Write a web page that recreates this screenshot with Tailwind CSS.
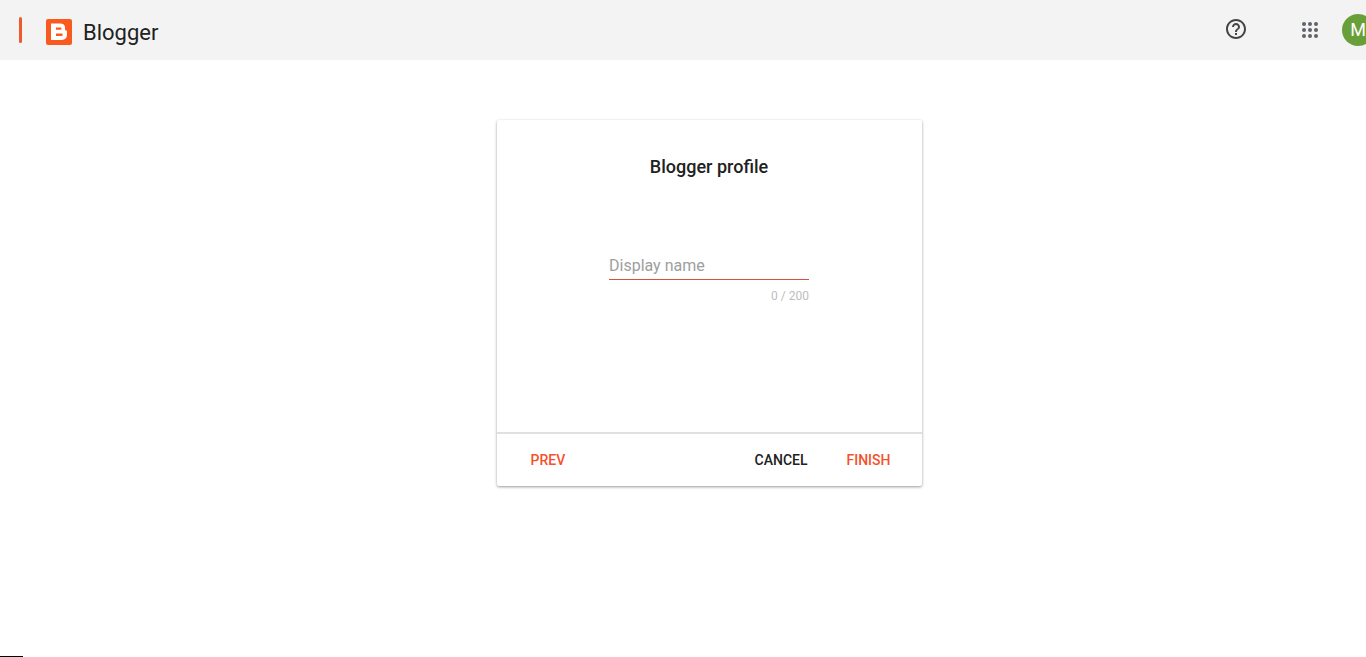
<!DOCTYPE html>
<html lang="en">
<head>
  <meta charset="UTF-8">
  <meta name="viewport" content="width=device-width, initial-scale=1.0">
  <title>Blogger</title>
  <script src="https://cdn.jsdelivr.net/npm/@tailwindcss/browser@4"></script>
</head>
<body class="min-h-screen bg-white font-[Roboto,sans-serif] text-[#212121]">
  <header class="flex h-15 items-center overflow-hidden bg-[#f3f3f3] pl-[19px]">
    <button aria-label="Main menu" class="mr-6 h-[26px] w-[3px] rounded-sm bg-[#f0592a]"></button>
    <a href="#" class="flex items-center gap-[11px] pt-1">
      <!-- Blogger logo -->
      <svg class="size-[26px]" viewBox="0 0 26 26" aria-hidden="true">
        <rect width="26" height="26" rx="2" fill="#fb5a1f"/>
        <path fill="#fff" fill-rule="evenodd" d="M5 4.500h9c3.300 0 5 1.600 5 4v1.700c0 .8.400 1.200 1 1.200.7 0 1 .4 1 1v3.400c0 3.300-1.900 5.200-5.200 5.200H5zM10 8.500v2.300h4.400a1.100 1.100 0 0 0 0-2.300zM10 14.500v2.400h5.500a1.200 1.200 0 0 0 0-2.400z"/>
      </svg>
      <span class="pt-[2px] text-[22px] leading-6">Blogger</span>
    </a>
    <nav class="-mr-2 ml-auto flex items-center">
      <button aria-label="Help" class="mr-[50px] pb-[2px] text-[#444]">
        <svg class="size-6" viewBox="0 0 24 24" fill="currentColor" aria-hidden="true">
          <path d="M11 18h2v-2h-2v2zm1-16C6.480 2 2 6.480 2 12s4.480 10 10 10 10-4.480 10-10S17.520 2 12 2zm0 18c-4.410 0-8-3.590-8-8s3.590-8 8-8 8 3.590 8 8-3.590 8-8 8zm0-14c-2.210 0-4 1.790-4 4h2c0-1.100.9-2 2-2s2 .9 2 2c0 2-3 1.750-3 5h2c0-2.250 3-2.500 3-5 0-2.210-1.790-4-4-4z"/>
        </svg>
      </button>
      <button aria-label="Google apps" class="mr-5 text-[#5f6368]">
        <svg class="size-6" viewBox="0 0 24 24" fill="currentColor" aria-hidden="true">
          <circle cx="6" cy="6" r="2"/><circle cx="12" cy="6" r="2"/><circle cx="18" cy="6" r="2"/>
          <circle cx="6" cy="12" r="2"/><circle cx="12" cy="12" r="2"/><circle cx="18" cy="12" r="2"/>
          <circle cx="6" cy="18" r="2"/><circle cx="12" cy="18" r="2"/><circle cx="18" cy="18" r="2"/>
        </svg>
      </button>
      <button aria-label="Account" class="size-8 rounded-full bg-[#689f38] text-lg text-white">M</button>
    </nav>
  </header>

  <main class="flex justify-center py-15 pl-13">
    <form class="w-full max-w-[425px] rounded-xs shadow-[0_1px_3px_rgba(0,0,0,0.4)]">
      <div class="flex flex-col items-center pt-[33px] pb-32">
        <h1 class="text-lg leading-7 font-medium">Blogger profile</h1>
        <div class="mt-[71px] w-50">
          <!-- the label sits over the field until something is typed -->
          <div class="relative">
            <input id="name" type="text" maxlength="200" placeholder=" " class="peer block h-[27px] w-full text-base outline-none">
            <label for="name" class="pointer-events-none absolute top-0 left-0 invisible text-base leading-[27px] text-[#9e9e9e] peer-placeholder-shown:visible">Display name</label>
            <div class="h-px bg-[#d9503f]"></div>
          </div>
          <p id="count" class="mt-2 text-right text-xs text-[#bdbdbd]">0 / 200</p>
        </div>
      </div>
      <div class="flex h-[54px] items-center border-t-2 border-[#e0e0e0] px-[31px] text-sm font-medium">
        <button type="button" class="px-[3px] text-[#f4512c]">PREV</button>
        <button type="button" class="mr-[39px] ml-auto">CANCEL</button>
        <button type="submit" class="text-[#f4512c]">FINISH</button>
      </div>
    </form>
  </main>

  <div class="fixed bottom-0 left-0 h-px w-[23px] bg-black"></div>

  <script>
    const input = document.getElementById('name');
    input.addEventListener('input', () => {
      document.getElementById('count').textContent = `${input.value.length} / 200`;
    });
  </script>
</body>
</html>
